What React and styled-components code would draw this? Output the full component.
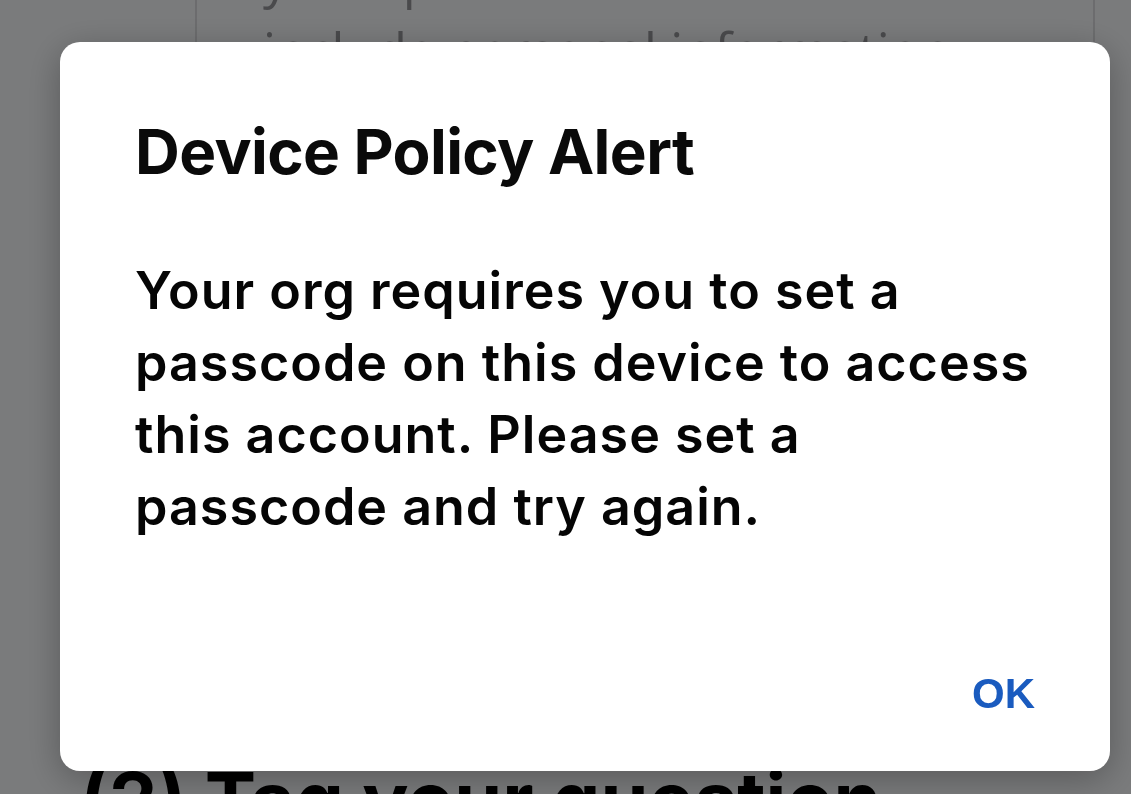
import React from "react";
import styled, { createGlobalStyle } from "styled-components";

const GlobalStyle = createGlobalStyle`
  html, body {
    margin: 0;
    padding: 0;
    height: 100%;
    overflow: hidden;
  }
  body {
    background: #f9fafc;
    font-family: "Open Sans", "Noto Sans", sans-serif;
  }
`;

const App = () => {
  return (
    <>
      <GlobalStyle />
      <Page>
        <Card>
          <CardText>
            your question. Do not
            <br />
            include personal information
          </CardText>
        </Card>
        <Heading>(2) Tag your question</Heading>
      </Page>

      <Overlay>
        <Dialog role="alertdialog">
          <Title>Device Policy Alert</Title>
          <Message>
            Your org requires you to set a passcode on this device to access
            this account. Please set a passcode and try again.
          </Message>
          <Actions>
            <ActionButton>OK</ActionButton>
          </Actions>
        </Dialog>
      </Overlay>
    </>
  );
};

export default App;

// page behind the alert, scrolled part-way down
const Page = styled.div`
  display: flex;
  flex-direction: column;
  padding-left: 80px;
  margin-top: -58px;
`;

const Card = styled.div`
  margin-left: 115px;
  width: 900px;
  height: 800px;
  box-sizing: border-box;
  border-left: 2px solid #dcdde0;
  border-right: 2px solid #dcdde0;
  padding-left: 66px;
`;

const CardText = styled.p`
  margin: 0;
  font-size: 51px;
  line-height: 72px;
  color: #97989c;
`;

const Heading = styled.h2`
  margin: 12px 0 0;
  font-family: "Inter", sans-serif;
  font-weight: 700;
  font-size: 77px;
  line-height: 92px;
  color: #000;
  white-space: nowrap;
`;

const Overlay = styled.div`
  position: fixed;
  inset: 0;
  background: rgba(0, 0, 0, 0.51);
  display: flex;
  align-items: flex-start;
  padding: 42px 0 0 60px;
`;

const Dialog = styled.div`
  width: 1050px;
  height: 729px;
  box-sizing: border-box;
  background: #fff;
  border-radius: 20px;
  box-shadow: 0 8px 36px rgba(0, 0, 0, 0.28);
  padding: 73px 75px 53px 75px;
  display: flex;
  flex-direction: column;
`;

const Title = styled.h1`
  margin: 0;
  font-family: "Inter", sans-serif;
  font-weight: 700;
  font-size: 62px;
  line-height: 74px;
  letter-spacing: -0.6px;
  color: #0a0a0a;
`;

const Message = styled.p`
  flex: 1;
  margin: 66px 0 0;
  font-family: "Inter", sans-serif;
  font-weight: 600;
  font-size: 52px;
  line-height: 72px;
  letter-spacing: 1px;
  color: #050505;
`;

const Actions = styled.div`
  display: flex;
  justify-content: flex-end;
`;

const ActionButton = styled.button`
  border: 0;
  background: none;
  padding: 0;
  font-family: "Liberation Sans", Arial, sans-serif;
  font-weight: 700;
  font-size: 42px;
  line-height: 48px;
  color: #1a5bbf;
  cursor: pointer;
`;
